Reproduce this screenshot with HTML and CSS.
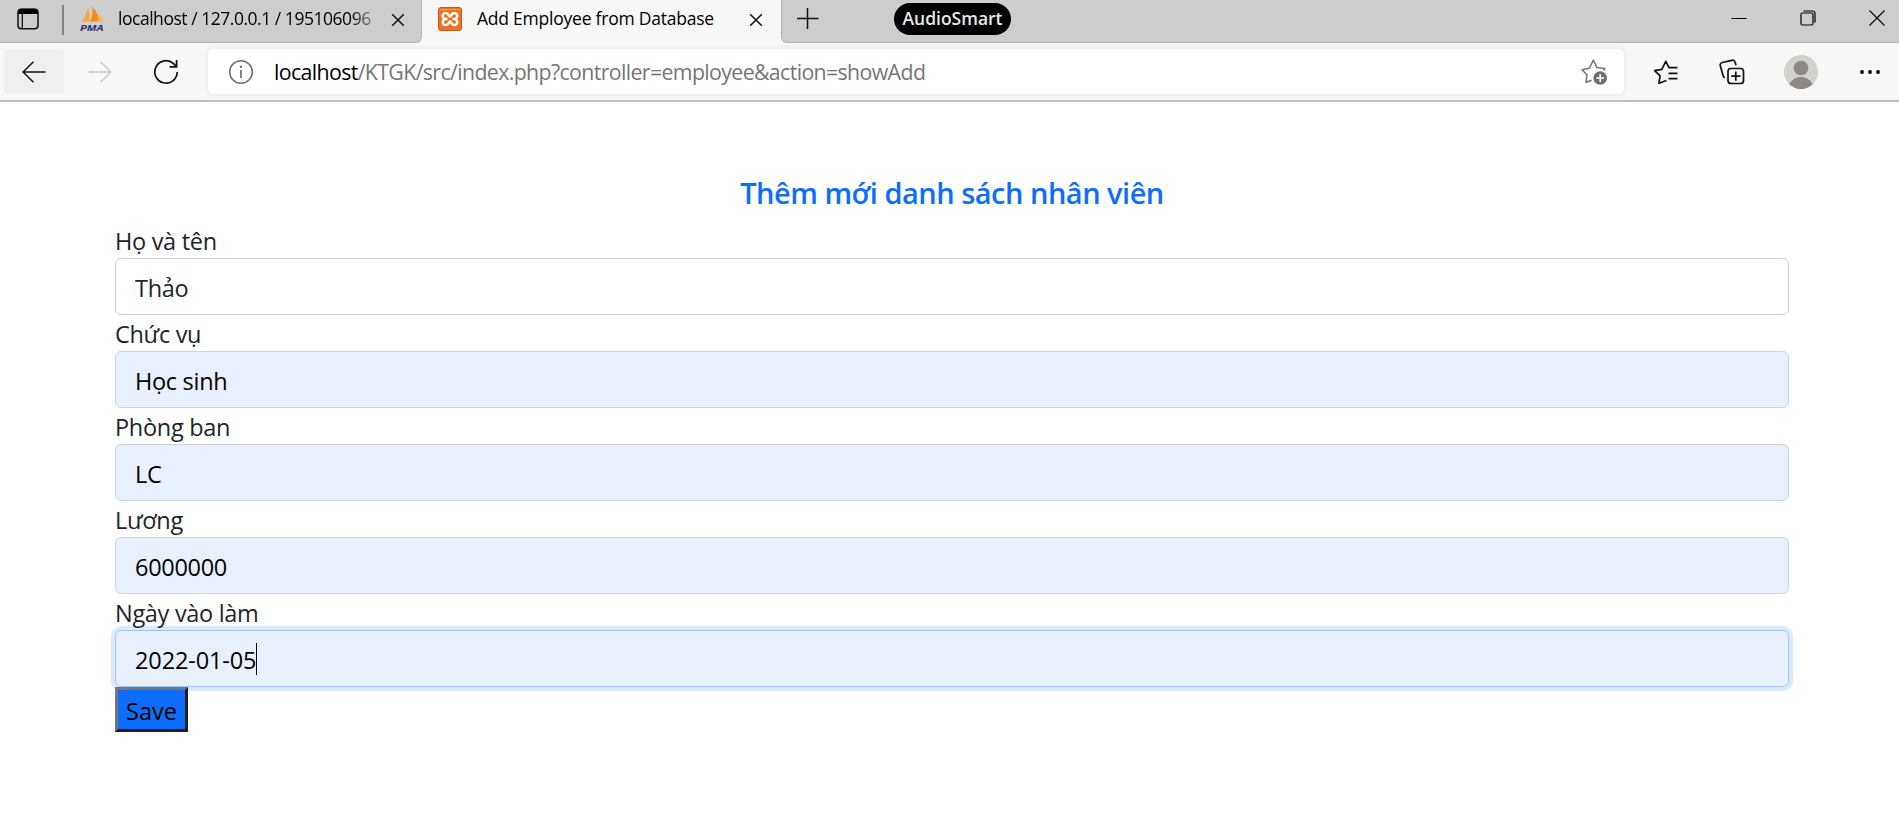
FILE: index.html
```html
<!DOCTYPE html>
<html lang="vi">
<head>
<meta charset="utf-8">
<title>Add Employee from Database</title>
<link rel="stylesheet" href="styles.css">
</head>
<body>
<header class="browser">
  <div class="tabstrip">
    <div class="strip-left">
      <svg class="tab-actions" width="22" height="22" viewBox="0 0 22 22"><rect x="1" y="1.2" width="20" height="19.6" rx="3.2" fill="none" stroke="#111" stroke-width="1.5"/><path d="M1 6V4a3.2 3.2 0 0 1 3.200-3.200h13.600A3.200 3.200 0 0 1 21 4v2z" fill="#000"/><path d="M5.300 6v14.500" stroke="#111" stroke-width="1.300"/></svg>
      <span class="divider"></span>
      <svg class="pma" width="26" height="26" viewBox="0 0 26 26"><path d="M3 15.500C5.500 12 8 7 9 2c1.500 4 2 9 1.500 13.500z" fill="#f7a545"/><path d="M11 15.500c2-4 3-9.500 2.500-14.500 4 4 6.500 9.500 6.500 14.500z" fill="#f68e1e"/><path d="M20.500 15.500c0-3-.5-5-1.500-7.500 3 1.500 4.800 4.500 5.500 7.500z" fill="#fbb45c"/><text class="pma-text" x="1" y="24.500" textLength="23.500" lengthAdjust="spacingAndGlyphs">PMA</text></svg>
      <span class="tab-title tab-title-bg">localhost / 127.0.0.1 / 195106096</span>
      <svg class="tab-x" width="14" height="14" viewBox="0 0 14 14"><path d="M1.200 1.200l11.600 11.600M12.800 1.200L1.200 12.800" stroke="#111" stroke-width="1.500"/></svg>
    </div>
    <div class="tab-active">
      <svg class="xampp" width="24" height="24" viewBox="0 0 24 24"><rect x=".5" y=".5" width="23" height="23" rx="2.500" fill="#ee7220" stroke="#c25c1a"/><path d="M2 2.500h20" stroke="#f7a468" stroke-width="1"/><path d="M9.500 12H7.700a3 3 0 1 1 2.600-4.500c.6 1 .7 2 1.700 2s1.100-1 1.700-2a3 3 0 1 1 2.600 4.500H14.500M9.500 12H7.700a3 3 0 1 0 2.600 4.500c.6-1 .7-2 1.700-2s1.100 1 1.700 2a3 3 0 1 0 2.600-4.500" fill="none" stroke="#fff" stroke-width="2.500"/></svg>
      <span class="tab-title tab-title-fg">Add Employee from Database</span>
      <svg class="tab-x2" width="14" height="14" viewBox="0 0 14 14"><path d="M1.200 1.200l11.600 11.600M12.800 1.200L1.200 12.800" stroke="#111" stroke-width="1.500"/></svg>
    </div>
    <div class="strip-right">
      <svg class="plus" width="22" height="22" viewBox="0 0 22 22"><path d="M0 10.500h21.500M10.500 0v21" stroke="#111" stroke-width="1.500"/></svg>
      <span class="audio">AudioSmart</span>
      <div class="winbtns">
        <svg width="16" height="16" viewBox="0 0 16 16"><path d="M.5 8.500h15" stroke="#000"/></svg>
        <svg width="16" height="16" viewBox="0 0 16 16"><rect x="1" y="3" width="12" height="12" rx="1.500" fill="none" stroke="#000" stroke-width="1.200"/><path d="M3.500 1h9A2.500 2.500 0 0 1 15 3.500v9.200" fill="none" stroke="#000" stroke-width="1.200"/></svg>
        <svg width="16" height="16" viewBox="0 0 16 16"><path d="M.5.5l15 15M15.500.5l-15 15" stroke="#000" stroke-width="1.100"/></svg>
      </div>
    </div>
  </div>
  <div class="toolbar">
    <span class="back"><svg width="24" height="22" viewBox="0 0 24 22"><path d="M23.500 11H1M11.500.7L1 11l10.500 10.300" fill="none" stroke="#111" stroke-width="1.500"/></svg></span>
    <svg class="fwd" width="24" height="22" viewBox="0 0 24 22"><path d="M.5 11H23M12.500.7L23 11 12.500 21.300" fill="none" stroke="#c8c8c8" stroke-width="1.500"/></svg>
    <svg class="reload" width="26" height="26" viewBox="0 0 26 26"><path d="M24.200 13a11.200 11.200 0 1 1-3.600-8.300l2.600 2.600M23.600 1v6.800H16.500" fill="none" stroke="#111" stroke-width="1.700"/></svg>
    <div class="address">
      <svg class="info" width="26" height="26" viewBox="0 0 26 26"><circle cx="13" cy="13" r="11.300" fill="none" stroke="#6e6e6e" stroke-width="1.500"/><path d="M13 11v8" stroke="#6e6e6e" stroke-width="1.700"/><circle cx="13" cy="7.800" r="1.200" fill="#6e6e6e"/></svg>
      <span class="url"><span class="host">localhost</span>/KTGK/src/index.php?controller=employee&amp;action=showAdd</span>
      <svg class="star-add" width="28" height="28" viewBox="0 0 28 28"><path d="M10.700 22.300L4.900 24.300 6 16.800 1 11.700 8.300 10.300 12.300 2.200 16 9.600 24 10.400 22.500 12.500" fill="none" stroke="#767676" stroke-width="1.500" stroke-linejoin="round"/><circle cx="19.200" cy="20" r="6.800" fill="#6e6e6e"/><path d="M15.300 20h7.800M19.200 16.100v7.800" stroke="#fff" stroke-width="1.600"/></svg>
    </div>
    <svg class="fav" width="26" height="26" viewBox="0 0 26 26"><path d="M13.500 21.500L6 24.200 7 16.800 1.700 11.600 8.800 10.300 12.800 2.300 16 8.700h8.500M15.500 14.300h9M15.500 19.700h9" fill="none" stroke="#111" stroke-width="1.700" stroke-linejoin="round"/></svg>
    <svg class="coll" width="26" height="26" viewBox="0 0 26 26"><rect x="9" y="9.500" width="15.500" height="15" rx="3" fill="none" stroke="#111" stroke-width="1.700"/><path d="M16.800 12.500v9.200M12.200 17.100h9.200M5.800 18.800a3 3 0 0 1-1.700-2.200L1.300 6.800a2.800 2.800 0 0 1 2-3.300L12.800 1.300a2.800 2.800 0 0 1 3.300 2l.9 3" fill="none" stroke="#111" stroke-width="1.700"/></svg>
    <svg class="avatar" width="34" height="34" viewBox="0 0 34 34"><defs><clipPath id="face"><circle cx="17" cy="17" r="17"/></clipPath></defs><circle cx="17" cy="17" r="17" fill="#d3d1ce"/><g clip-path="url(#face)" fill="#8b8886"><circle cx="17" cy="13" r="7.300"/><path d="M4.800 30c2.400-5 7-8 12.200-8s9.800 3 12.200 8l-5 4H9z"/></g></svg>
    <svg class="dots" width="20" height="6" viewBox="0 0 20 6"><circle cx="2" cy="3" r="1.900"/><circle cx="10" cy="3" r="1.900"/><circle cx="18" cy="3" r="1.900"/></svg>
  </div>
</header>
<main class="page">
  <h1 class="heading">Thêm mới danh sách nhân viên</h1>
  <form class="form">
    <label class="label">Họ và tên</label>
    <div class="field plain"><span>Thảo</span></div>
    <label class="label">Chức vụ</label>
    <div class="field"><span>Học sinh</span></div>
    <label class="label">Phòng ban</label>
    <div class="field"><span>LC</span></div>
    <label class="label">Lương</label>
    <div class="field"><span>6000000</span></div>
    <label class="label">Ngày vào làm</label>
    <div class="field focused"><span class="date">2022-01-05</span><i class="caret"></i></div>
    <button class="save" type="button">Save</button>
  </form>
</main>
</body>
</html>
```
FILE: styles.css
```css
* { box-sizing: border-box; }
body { margin: 0; background: #fff; font-family: "Open Sans", "Noto Sans", sans-serif; color: #212529; overflow: hidden; }
svg { display: block; flex: none; }
.browser { background: #f7f7f7; height: 102px; border-bottom: 2px solid #bfbfbf; }
.tabstrip { display: flex; height: 43px; }
.strip-left, .strip-right { background: #cdcdcd; border-bottom: 1px solid #b5b5b5; display: flex; align-items: flex-start; }
.strip-left { width: 422px; padding-left: 17px; border-right: 1px solid #b5b5b5; border-bottom-right-radius: 6px; }
.strip-right { flex: 1; border-left: 1px solid #b5b5b5; border-bottom-left-radius: 6px; }
.tab-active { width: 359px; display: flex; align-items: flex-start; }
.tab-actions { margin-top: 8px; }
.divider { width: 2px; height: 30px; margin: 5px 0 0 23px; background: #858585; }
.pma { margin: 6px 0 0 15px; }
.pma-text { font: italic 700 9.500px "Open Sans", sans-serif; fill: #33336b; }
.tab-title { font-size: 17.500px; line-height: 24px; margin-top: 6px; white-space: nowrap; color: #000; flex: none; letter-spacing: -.23px; }
.tab-title-bg { width: 262px; margin-left: 13px; letter-spacing: -.47px; -webkit-mask-image: linear-gradient(90deg, #000 232px, transparent 266px); mask-image: linear-gradient(90deg, #000 232px, transparent 266px); }
.tab-x { margin: 13px 0 0 11px; }
.xampp { margin: 7px 0 0 16px; }
.tab-title-fg { width: 258px; margin-left: 15px; }
.tab-x2 { margin: 13px 0 0 14px; }
.plus { margin: 8px 0 0 15px; }
.audio { width: 117px; height: 32px; margin: 3px 0 0 75px; border-radius: 16px; background: #000; color: #e8e8e8; font: 600 17.500px/30px "Open Sans", sans-serif; text-align: center; }
.winbtns { display: flex; gap: 53px; margin: 10px 14px 0 auto; }
.toolbar { display: flex; height: 57px; align-items: center; }
.back { width: 60px; height: 45px; margin-left: 4px; background: #efefef; border-radius: 4px; display: flex; align-items: center; padding-left: 18px; }
.fwd { margin-left: 24px; }
.reload { margin-left: 41px; }
.address { width: 1416px; height: 45px; margin-left: 29px; background: #fff; border-radius: 6px; box-shadow: 0 0 6px rgba(0,0,0,.08); display: flex; align-items: center; }
.info { margin-left: 20px; }
.url { margin-left: 20px; font-size: 21.300px; line-height: 30px; color: #767676; white-space: nowrap; letter-spacing: -.62px; }
.host { color: #000; }
.star-add { margin: 0 15px 0 auto; }
.fav { margin-left: 29px; }
.coll { margin-left: 40px; }
.avatar { margin-left: 39px; }
.dots { margin-left: 42px; }
.page { padding: 73px 110px 0 115px; }
.heading { margin: 0; height: 48px; line-height: 36px; font-size: 29px; font-weight: 600; text-align: center; color: #0d6efd; letter-spacing: -.5px; }
.form { font-size: 23.500px; line-height: 36px; letter-spacing: -.3px; }
.label { display: block; height: 36px; padding-top: 1px; white-space: nowrap; }
.form > .label:first-child { height: 35px; padding-top: 0; }
.field { height: 57px; border: 1px solid #ced4da; border-radius: 6px; padding: 2px 18px 0 19px; display: flex; align-items: center; background: #e8f0fe; color: #000; }
.plain { background: #fff; color: #212529; }
.focused { border-color: #9ec5f7; box-shadow: 0 0 0 4px #dbe9ff; }
.date { letter-spacing: -.12px; }
.caret { width: 1px; height: 32px; margin-top: -1px; background: #000; }
.save { display: block; position: relative; width: 73px; height: 45px; padding: 2px 0 0; border: 3px solid; border-color: #767676 #212121 #212121 #767676; background: #0d6efd; color: #000; font: inherit; text-align: center; }
```
